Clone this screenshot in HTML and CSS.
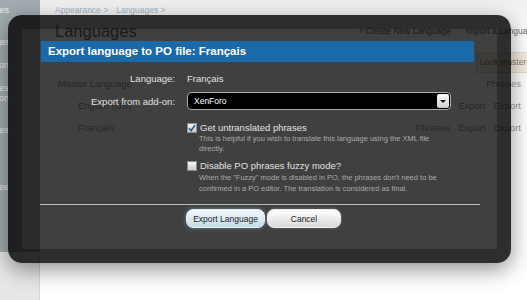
FILE: index.html
```html
<!DOCTYPE html>
<html lang="en">
<head>
    <meta charset="UTF-8" />
    <title>Languages - Export language to PO file</title>
    <link rel="stylesheet" href="styles.css">
</head>
<body>

<div class="page">
    <aside class="sidebar">
        <ul class="nav">
            <li class="nav-top">Styles</li>
            <li class="nav-gap">Style Properties Manager</li>
            <li>Templates: Editor Optimization</li>
            <li>Phrases</li>
            <li class="nav-sub">Admin Option</li>
            <li class="nav-gap">Languages &amp; Phrases</li>
            <li class="nav-far">Style Tree</li>
        </ul>
        <div class="sidebar-foot"></div>
    </aside>

    <main class="content">
        <div class="breadcrumb"><span>Appearance &gt;</span><span>Languages &gt;</span></div>
        <div class="title-row">
            <h1>Languages</h1>
            <div class="actions">
                <span>+ Create New Language</span>
                <span>Import a Language</span>
            </div>
        </div>
        <div class="notice-row"><div class="notice">Lock master language</div></div>
        <div class="lang-list">
            <div class="lang-row lang-head"><span>Master Language</span><span class="lang-links">Phrases</span></div>
            <div class="lang-row"><span class="lang-name">English (US)</span><span class="lang-links">Export &nbsp; Export</span></div>
            <div class="lang-row"><span class="lang-name">Français</span><span class="lang-links">Phrases &nbsp; Export &nbsp; Export</span></div>
        </div>
    </main>
</div>

<div class="overlay">
    <div class="overlay-title">Export language to PO file: Français</div>

    <form class="export-form" onsubmit="return false;">
        <div class="row row-first">
            <div class="row-label">Language:</div>
            <div class="row-value">Français</div>
        </div>

        <div class="row row-select">
            <div class="row-label">Export from add-on:</div>
            <div class="select">
                <span>XenForo</span>
                <span class="select-arrow"></span>
            </div>
        </div>

        <div class="row row-check">
            <div></div>
            <div>
                <div class="check">
                    <span class="check-box checked">
                        <svg width="8" height="8" viewBox="0 0 8 8"><path d="M1 4.2 L3.2 6.6 L7 1" fill="none" stroke="#2f5d8c" stroke-width="1.6"/></svg>
                    </span>
                    <span>Get untranslated phrases</span>
                </div>
                <div class="hint">This is helpful if you wish to translate this language using the XML file<br>directly.</div>
            </div>
        </div>

        <div class="row row-check2">
            <div></div>
            <div>
                <div class="check">
                    <span class="check-box"></span>
                    <span>Disable PO phrases fuzzy mode?</span>
                </div>
                <div class="hint hint-wide">When the "Fuzzy" mode is disabled in PO, the phrases don't need to be<br>confirmed in a PO editor. The translation is considered as final.</div>
            </div>
        </div>

        <div class="form-line"></div>

        <div class="buttons">
            <button class="btn btn-primary">Export Language</button>
            <button class="btn">Cancel</button>
        </div>
    </form>
</div>

</body>
</html>
```

FILE: styles.css
```css
body {
    margin: 0;
    width: 527px;
    height: 300px;
    overflow: hidden;
    position: relative;
    font-family: "Liberation Sans", Arial, sans-serif;
    background-color: #fff;
}

/* page behind the overlay */
.page {
    display: flex;
    height: 300px;
}
.sidebar {
    width: 40px;
    flex: none;
    display: flex;
    flex-direction: column;
}
.nav {
    height: 252px;
    margin: 0;
    padding: 5px 0 0;
    box-sizing: border-box;
    list-style: none;
    background-color: #a3adb1;
    overflow: hidden;
}
.nav li {
    display: flex;
    justify-content: flex-end;
    width: 9px;
    white-space: nowrap;
    font-size: 9px;
    line-height: 10px;
    color: #eef1f1;
}
.nav li + li { margin-top: 13px; }
.nav .nav-sub { margin-top: 0; }
.nav .nav-gap { margin-top: 22px; }
.nav .nav-far { margin-top: 47px; }
.sidebar-foot {
    flex: 1;
    background-color: #e6e8e8;
    border-right: 1px solid #d2d6d6;
}

.content {
    flex: 1;
    padding: 0 0 0 15px;
    background: linear-gradient(#f0f0f0, #fff 40px);
    overflow: hidden;
}
.breadcrumb {
    display: flex;
    gap: 8px;
    margin-top: 5px;
    font-size: 8.5px;
    line-height: 10px;
    color: #a3b5c7;
}
.title-row {
    display: flex;
    align-items: center;
    justify-content: space-between;
    margin-top: 5px;
}
h1 {
    margin: 0;
    font-size: 16.5px;
    font-weight: normal;
    line-height: 22px;
    color: #6a6a6a;
}
.actions {
    display: flex;
    gap: 15px;
    margin-right: -10px;
    font-size: 8.5px;
    color: #6a6a6a;
}
.notice-row {
    display: flex;
    justify-content: flex-end;
    margin-top: 10px;
}
.notice {
    width: 47px;
    height: 19px;
    padding-left: 3px;
    white-space: nowrap;
    overflow: hidden;
    font-size: 8.5px;
    line-height: 19px;
    color: #8a7f6c;
    background-color: #f4eee3;
    border: 1px solid #e6dccb;
    border-right: none;
}
.lang-list {
    font-size: 9.5px;
    color: #9a9a9a;
}
.lang-row {
    display: flex;
    justify-content: space-between;
    height: 22px;
    line-height: 22px;
}
.lang-head { padding-left: 3px; }
.lang-name { padding-left: 23px; }
.lang-links { margin-right: 6px; }

/* overlay dialog */
.overlay {
    position: absolute;
    left: 8px;
    top: 15px;
    width: 475px;
    height: 220px;
    border: 14px solid rgba(0, 0, 0, 0.82);
    border-radius: 14px;
    background-color: rgba(0, 0, 0, 0.75);
    background-clip: padding-box;
    box-shadow: 0 6px 22px rgba(0, 0, 0, 0.45);
}
.overlay-title {
    margin: 12px 23px 0 19px;
    height: 21px;
    padding-left: 7px;
    line-height: 21px;
    font-size: 11.5px;
    font-weight: bold;
    color: #fff;
    background-color: #1c69a7;
}

.export-form {
    width: 440px;
    margin-left: 18px;
}
.row {
    display: grid;
    grid-template-columns: 135px 1fr;
    column-gap: 12px;
    font-size: 9.5px;
    color: #e2e2e2;
}
.row-label {
    text-align: right;
}
.row-first {
    margin-top: 10px;
    line-height: 14px;
}
.row-select {
    margin-top: 6px;
    align-items: center;
}
.select {
    display: flex;
    align-items: center;
    justify-content: space-between;
    width: 264px;
    height: 18px;
    box-sizing: border-box;
    padding: 0 1px 0 6px;
    font-size: 8.5px;
    color: #fff;
    background-color: #000;
    border: 1px solid #a9a9a9;
    border-radius: 4px;
}
.select-arrow {
    display: flex;
    align-items: center;
    justify-content: center;
    width: 12px;
    height: 14px;
    border-radius: 2px;
    background: linear-gradient(#fafafa, #cfcfcf);
}
.select-arrow::after {
    content: "";
    border-left: 3px solid transparent;
    border-right: 3px solid transparent;
    border-top: 3px solid #111;
}

.row-check {
    margin-top: 12px;
}
.row-check2 {
    margin-top: 6px;
}
.check {
    display: flex;
    align-items: center;
    gap: 3px;
    line-height: 12px;
}
.check-box {
    display: flex;
    align-items: center;
    justify-content: center;
    width: 10px;
    height: 10px;
    box-sizing: border-box;
    border: 1px solid #8d8d8d;
    background: linear-gradient(#f4f4f4, #cdcdcd);
}
.hint {
    margin-left: 12px;
    font-size: 7.5px;
    line-height: 10px;
    color: #a9a9a9;
}
.hint-wide {
    margin-top: 1px;
    line-height: 10.5px;
}

.form-line {
    margin-top: 10px;
    border-top: 1px solid #b7bfbf;
}
.buttons {
    display: flex;
    justify-content: center;
    gap: 2px;
    margin-top: 4px;
    padding-left: 7px;
}
.btn {
    width: 74px;
    height: 19px;
    padding: 0;
    font-family: inherit;
    font-size: 8.5px;
    color: #222;
    border: 1px solid #f0f0f0;
    border-radius: 7px;
    background: linear-gradient(#ffffff, #d9d9d9);
    box-shadow: 0 0 3px rgba(255, 255, 255, 0.25);
}
.btn-primary {
    width: 79px;
    border-color: #e6f0f5;
    background: linear-gradient(#f2f8fb, #c6dbe6);
    box-shadow: 0 0 4px rgba(160, 205, 230, 0.45);
}
```
